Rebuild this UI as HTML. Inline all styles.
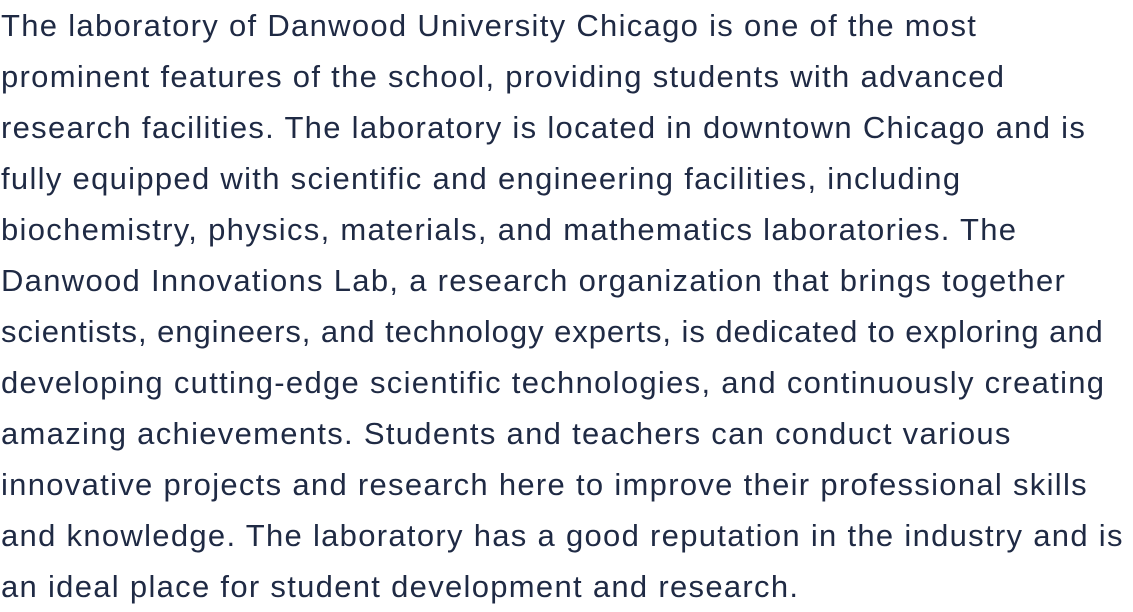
<!DOCTYPE html>
<html><head><meta charset="utf-8"><style>
html,body{margin:0;padding:0;background:#fff;width:1133px;height:612px;overflow:hidden}
p{margin:0;padding:0 0 0 1px;font-family:"Liberation Sans",Arial,sans-serif;font-size:31px;letter-spacing:1.3px;line-height:51px;color:#1f2a44;white-space:nowrap}
</style></head><body><p>The laboratory of Danwood University Chicago is one of the most<br>prominent features of the school, providing students with advanced<br>research facilities. The laboratory is located in downtown Chicago and is<br>fully equipped with scientific and engineering facilities, including<br>biochemistry, physics, materials, and mathematics laboratories. The<br>Danwood Innovations Lab, a research organization that brings together<br><span style="letter-spacing:0.95px">scientists, engineers, and technology experts, is dedicated to exploring and</span><br>developing cutting-edge scientific technologies, and continuously creating<br>amazing achievements. Students and teachers can conduct various<br>innovative projects and research here to improve their professional skills<br>and knowledge. The laboratory has a good reputation in the industry and is<br>an ideal place for student development and research.</p></body></html>
